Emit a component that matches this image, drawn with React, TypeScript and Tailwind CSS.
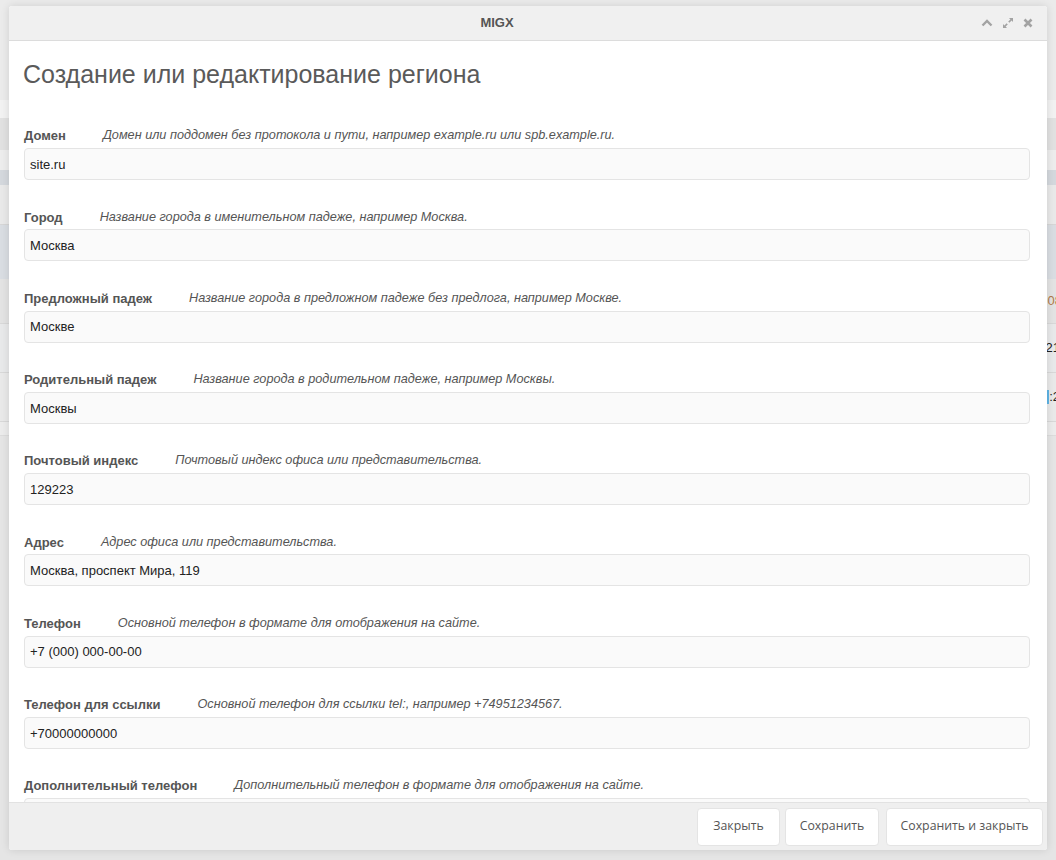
import React from 'react';

const fields = [
  { label: 'Домен', hint: 'Домен или поддомен без протокола и пути, например example.ru или spb.example.ru.', value: 'site.ru' },
  { label: 'Город', hint: 'Название города в именительном падеже, например Москва.', value: 'Москва' },
  { label: 'Предложный падеж', hint: 'Название города в предложном падеже без предлога, например Москве.', value: 'Москве' },
  { label: 'Родительный падеж', hint: 'Название города в родительном падеже, например Москвы.', value: 'Москвы' },
  { label: 'Почтовый индекс', hint: 'Почтовый индекс офиса или представительства.', value: '129223' },
  { label: 'Адрес', hint: 'Адрес офиса или представительства.', value: 'Москва, проспект Мира, 119' },
  { label: 'Телефон', hint: 'Основной телефон в формате для отображения на сайте.', value: '+7 (000) 000-00-00' },
  { label: 'Телефон для ссылки', hint: 'Основной телефон для ссылки tel:, например +74951234567.', value: '+70000000000' },
  { label: 'Дополнительный телефон', hint: 'Дополнительный телефон в формате для отображения на сайте.', value: '' },
];

const buttons = [
  { text: 'Закрыть', cls: 'w-[83px]' },
  { text: 'Сохранить', cls: 'w-[94px] ml-[5px]' },
  { text: 'Сохранить и закрыть', cls: 'w-[157px] ml-[7px]' },
];

// dimmed page behind the window
function Backdrop() {
  return (
    <div className="flex flex-col w-full h-[860px] bg-[#e6e6e6] text-[13px] font-['Liberation_Sans',sans-serif]">
      <div className="h-[100px] bg-[#ebebeb]" />
      <div className="h-[18px] bg-[#f2f2f2]" />
      <div className="h-[32px] bg-[#e1e1e1]" />
      <div className="h-[20px] bg-[#ededed]" />
      <div className="h-[15px] bg-[#d4d8dd]" />
      <div className="h-[40px] bg-[#e9e9e9] border-b border-[#d6d6d6]" />
      <div className="h-[54px] bg-[#d9dde2]" />
      <div className="h-[45px] bg-[#e3e3e3] flex items-center justify-end border-b border-[#d8d8d8]">
        <span className="mr-[-6px] text-[#b07a4a]">08</span>
      </div>
      <div className="h-[49px] bg-[#e8e9ea] flex items-center justify-end border-b border-[#d8d8d8]">
        <span className="mr-[-4px] text-[#222]">21</span>
      </div>
      <div className="h-[49px] bg-[#e9e9e9] flex items-center justify-end border-b border-[#d8d8d8]">
        <span className="w-[3px] h-[14px] bg-[#5fb4e6]" />
        <span className="mr-[-4px] text-[#222]">:2</span>
      </div>
      <div className="h-[14px] bg-[#ececec] border-b border-[#dcdcdc]" />
      <div className="flex-1 bg-[#e5e5e5]" />
    </div>
  );
}

function HeaderTools() {
  return (
    <div className="flex items-center gap-[9px] text-[#a3a3a3]">
      <svg width="12" height="12" viewBox="0 0 12 12">
        <path d="M1.5 8.5 L6 4 L10.5 8.5" fill="none" stroke="currentColor" strokeWidth="2.4" />
      </svg>
      <svg width="12" height="12" viewBox="0 0 12 12">
        <path d="M7 1h4v4l-1.4-1.4-2.2 2.2-1.2-1.2 2.2-2.2z" fill="currentColor" />
        <path d="M5 11H1V7l1.4 1.4 2.2-2.2 1.2 1.2-2.2 2.2z" fill="currentColor" />
      </svg>
      <svg width="10" height="10" viewBox="0 0 10 10">
        <path d="M1.5 1.5 L8.5 8.5 M8.5 1.5 L1.5 8.5" fill="none" stroke="currentColor" strokeWidth="2.6" />
      </svg>
    </div>
  );
}

export default function App() {
  return (
    <div className="relative w-[1056px] h-[860px] overflow-hidden">
      <Backdrop />

      <div className="absolute left-[9px] top-[6px] w-[1038px] h-[844px] flex flex-col bg-white rounded-[3px] overflow-hidden shadow-[0_0_8px_rgba(0,0,0,0.12)] font-['Liberation_Sans',sans-serif]">
        {/* title bar */}
        <div className="relative h-[35px] shrink-0 flex items-center justify-center pr-[62px] bg-[#f0f0f0] border-b border-[#dcdcdc]">
          <span className="text-[13px] font-bold text-[#555]">MIGX</span>
          <div className="absolute right-[14px] top-[11px]">
            <HeaderTools />
          </div>
        </div>

        {/* body */}
        <div className="flex-1 overflow-hidden pl-[14px] pr-[17px] pt-[19px]">
          <h1 className="text-[25px] leading-[28px] text-[#5a5a5a] font-normal">Создание или редактирование региона</h1>
          <div className="mt-[40px] pl-[1px]">
            {fields.map((f) => (
              <div key={f.label} className="mb-[29.25px]">
                <div className="flex items-center h-[16px] text-[#555]">
                  <span className="text-[13px] font-bold">{f.label}</span>
                  <span className="ml-[37px] text-[12.7px] italic">{f.hint}</span>
                </div>
                <div className="mt-[4px] h-[32px] flex items-center px-[5px] pt-[1px] bg-[#fafafa] border border-[#e4e4e4] rounded-[4px] text-[13px] text-[#222]">
                  {f.value}
                </div>
              </div>
            ))}
          </div>
        </div>

        {/* footer */}
        <div className="h-[48px] shrink-0 flex items-center justify-end pr-[4px] bg-[#efefef] border-t border-[#e2e2e2] font-['Open_Sans',sans-serif]">
          {buttons.map((b) => (
            <button
              key={b.text}
              className={`${b.cls} h-[38px] bg-white border border-[#e4e4e4] rounded-[4px] text-[12.3px] text-[#555]`}
            >
              {b.text}
            </button>
          ))}
        </div>
      </div>
    </div>
  );
}
